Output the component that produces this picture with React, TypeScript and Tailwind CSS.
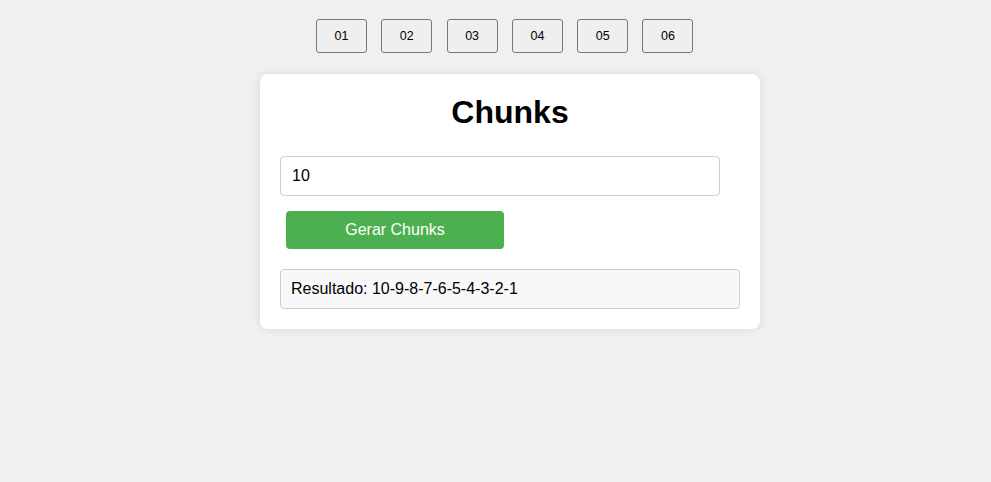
import { useState } from "react";

const PAGES = ["01", "02", "03", "04", "05", "06"];

export default function App() {
  const [value, setValue] = useState("10");
  const [result, setResult] = useState("10-9-8-7-6-5-4-3-2-1");

  const gerar = () => {
    const n = parseInt(value, 10);
    if (Number.isNaN(n)) return;
    const parts: number[] = [];
    for (let i = n; i >= 1; i--) parts.push(i);
    setResult(parts.join("-"));
  };

  return (
    <div className="min-h-[482px] bg-[#f0f0f0] font-['Liberation_Sans',Arial,sans-serif] text-black">
      <nav className="flex gap-[14.3px] pl-[316px] pt-[19px]">
        {PAGES.map((p) => (
          <button
            key={p}
            type="button"
            className="h-[34px] w-[51px] rounded-[3px] border border-[#767676] bg-[#efefef] text-[12.5px] text-black"
          >
            {p}
          </button>
        ))}
      </nav>

      <div className="ml-[260px] mt-[21px] w-[500px] rounded-lg bg-white p-5 shadow-[0_0_10px_rgba(0,0,0,0.1)]">
        <h1 className="text-center text-[32px] font-bold leading-[37px]">Chunks</h1>
        <input
          type="text"
          value={value}
          onChange={(e) => setValue(e.target.value)}
          className="mt-[25px] block h-10 w-[440px] rounded-[4px] border border-[#ccc] px-[11px] text-[16px] outline-none"
        />
        <button
          type="button"
          onClick={gerar}
          className="ml-[6px] mt-[15px] block h-[38px] w-[218px] rounded-[4px] bg-[#4caf50] text-[16px] text-white"
        >
          Gerar Chunks
        </button>
        <div className="mt-5 flex h-10 items-center rounded-[4px] border border-[#ccc] bg-[#f8f8f8] px-[10px] text-[16px]">
          Resultado: {result}
        </div>
      </div>
    </div>
  );
}
